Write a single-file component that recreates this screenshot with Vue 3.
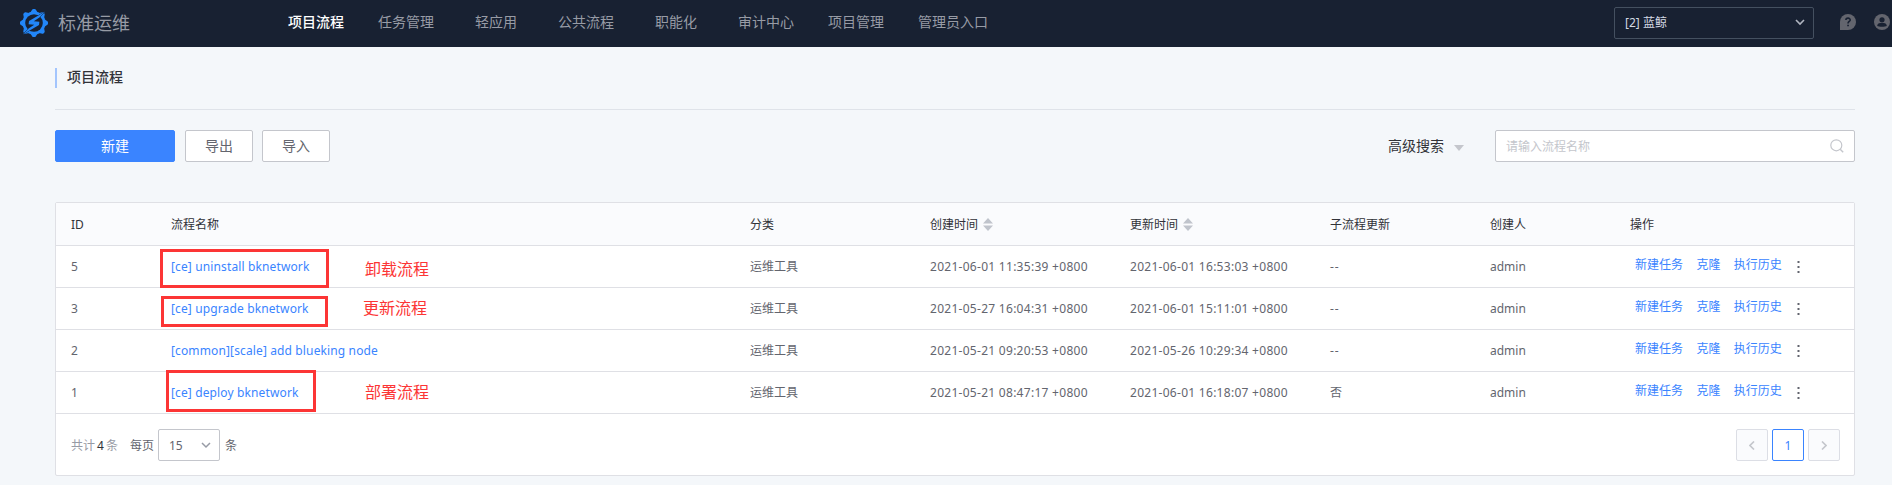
<script setup>
const nav = [
  { t: '项目流程', on: true }, { t: '任务管理' }, { t: '轻应用' }, { t: '公共流程' },
  { t: '职能化' }, { t: '审计中心' }, { t: '项目管理' }, { t: '管理员入口' }
]
const teeth = [0, 45, 90, 135, 180, 225, 270, 315]
const cols = [
  { t: 'ID' }, { t: '流程名称' }, { t: '分类' }, { t: '创建时间', sort: true },
  { t: '更新时间', sort: true }, { t: '子流程更新' }, { t: '创建人' }, { t: '操作' }
]
const rows = [
  { id: 5, name: '[ce] uninstall bknetwork', c: '2021-06-01 11:35:39 +0800', u: '2021-06-01 16:53:03 +0800', s: '--', mark: 'uninstall', note: '卸载流程' },
  { id: 3, name: '[ce] upgrade bknetwork', c: '2021-05-27 16:04:31 +0800', u: '2021-06-01 15:11:01 +0800', s: '--', mark: 'upgrade', note: '更新流程' },
  { id: 2, name: '[common][scale] add blueking node', c: '2021-05-21 09:20:53 +0800', u: '2021-05-26 10:29:34 +0800', s: '--' },
  { id: 1, name: '[ce] deploy bknetwork', c: '2021-05-21 08:47:17 +0800', u: '2021-06-01 16:18:07 +0800', s: '否', mark: 'deploy', note: '部署流程' }
]
</script>

<template>
  <div class="page">
    <header class="top">
      <svg class="logo" viewBox="0 0 28 28">
        <g fill="#2286f8">
          <circle cx="14" cy="14" r="11.600" />
          <path v-for="a in teeth" :key="a" d="M10.500 3.200 12.300.6Q12.600 0 13.300 0h1.400q.7 0 1 .6l1.800 2.600z" :transform="`rotate(${a} 14 14)`" />
        </g>
        <circle cx="14" cy="14" r="8.800" fill="#182132" />
        <g fill="#2286f8" stroke="#182132" stroke-width=".9" paint-order="stroke">
          <path d="M25.200 2.600 9 12 8.600 15.300 14.200 15.700 8.600 19.600 2.800 25.400 19 16 19.400 12.700 13.800 12.300 19.400 8.400z" />
        </g>
      </svg>
      <span class="brand">标准运维</span>
      <nav class="nav"><a v-for="n in nav" :key="n.t" :class="{ on: n.on }">{{ n.t }}</a></nav>
      <div class="project"><span>[2] 蓝鲸</span>
        <svg width="10" height="7" viewBox="0 0 10 7"><path d="M1 1l4 4 4-4" fill="none" stroke="#b0b5c0" stroke-width="1.600" /></svg>
      </div>
      <svg class="help" viewBox="0 0 16 16"><path fill="#63656e" d="M0 16V8a8 8 0 1 1 8 8z" /><path d="M5.900 6.100c0-2.700 4.300-2.600 4.300-.2C10.200 7.500 8 7.500 8 9.500" fill="none" stroke="#182132" stroke-width="1.600" /><path fill="#182132" d="M7.200 10.700h1.700v1.600H7.200z" /></svg>
      <svg class="user" viewBox="0 0 16 16"><circle cx="8" cy="8" r="8" fill="#63656e" /><circle cx="8" cy="5.800" r="2.600" fill="#182132" /><path fill="#182132" d="M3.200 12c0-2 1.500-3 3-3h3.600c1.500 0 3 1 3 3-1.500 1.100-8 1.100-9.600 0z" /></svg>
    </header>

    <main class="main">
      <div class="title"><h1>项目流程</h1></div>
      <div class="tools">
        <button class="btn primary">新建</button>
        <button class="btn">导出</button>
        <button class="btn">导入</button>
        <span class="adv">高级搜索<i></i></span>
        <div class="search"><span class="drop">请输入流程名称</span>
          <svg width="14" height="14" viewBox="0 0 14 14"><circle cx="6.300" cy="6.300" r="5.500" fill="none" stroke="#c4c6cc" stroke-width="1.200" /><path d="M10.200 10.200l3 3" stroke="#c4c6cc" stroke-width="1.400" /></svg>
        </div>
      </div>

      <section class="table">
        <div class="row head">
          <span v-for="c in cols" :key="c.t" class="cell">{{ c.t }}<svg v-if="c.sort" class="sort" width="10" height="13" viewBox="0 0 10 13"><path fill="#c0c4cc" d="M5 0l5 5.500H0zM5 13l5-5.500H0z" /></svg></span>
        </div>
        <div v-for="r in rows" :key="r.id" class="row">
          <span class="cell">{{ r.id }}</span>
          <span class="cell link name">{{ r.name }}
            <i v-if="r.mark" class="box" :class="r.mark"></i>
            <b v-if="r.note" class="note" :class="r.mark">{{ r.note }}</b>
          </span>
          <span class="cell">运维工具</span>
          <span class="cell date">{{ r.c }}</span>
          <span class="cell date">{{ r.u }}</span>
          <span class="cell" :class="{ dash: r.s === '--' }">{{ r.s }}</span>
          <span class="cell">admin</span>
          <span class="cell ops"><a>新建任务</a><a>克隆</a><a>执行历史</a>
            <svg width="3" height="12" viewBox="0 0 3 12"><path fill="#63656e" d="M.5 0h2v2h-2zM.5 5h2v2h-2zM.5 10h2v2h-2z" /></svg>
          </span>
        </div>
        <footer class="foot">
          <span class="total drop">共计<em>4</em>条</span>
          <span class="per drop">每页</span>
          <span class="size"><span class="drop">15</span><svg width="10" height="7" viewBox="0 0 10 7"><path d="M1 1l4 4 4-4" fill="none" stroke="#979ba5" stroke-width="1.500" /></svg></span>
          <span class="drop">条</span>
          <div class="pager">
            <span class="pg off"><svg width="6" height="9" viewBox="0 0 6 9"><path d="M5 .5l-4 4 4 4" fill="none" stroke="#c4c6cc" stroke-width="1.600" /></svg></span>
            <span class="pg on"><span class="drop">1</span></span>
            <span class="pg off"><svg width="6" height="9" viewBox="0 0 6 9"><path d="M1 .5l4 4-4 4" fill="none" stroke="#c4c6cc" stroke-width="1.600" /></svg></span>
          </div>
        </footer>
      </section>
    </main>
  </div>
</template>

<style>
body { background: #f4f7fa; }
</style>

<style scoped>
* { box-sizing: border-box; }
.page { width: 1892px; height: 485px; overflow: hidden; background: #f4f7fa; font: 12px/16px "Noto Sans", "Noto Sans CJK SC", sans-serif; color: #63656e; white-space: nowrap; }
.top { height: 47px; background: #182132; display: flex; align-items: center; padding-left: 20px; }
.logo { width: 28px; height: 28px; flex: none; margin-top: -1px; }
.brand { font-size: 18px; line-height: 24px; color: #979ba5; width: 230px; margin: -2px 0 0 10px; flex: none; }
.nav { display: flex; gap: 34px; width: 1326px; flex: none; font-size: 14px; line-height: 20px; color: #979ba5; margin-top: -3px; }
.nav a { min-width: 56px; text-align: center; }
.nav .on { color: #fff; font-weight: 500; }
.project { width: 200px; height: 32px; flex: none; border: 1px solid #445060; border-radius: 2px; display: flex; align-items: center; justify-content: space-between; padding: 0 8px 0 10px; color: #d3d9e4; margin-top: -2px; }
.help { width: 16px; height: 16px; flex: none; margin: -4px 0 0 26px; }
.user { width: 16px; height: 16px; flex: none; margin: -4px 0 0 18px; }
.main { margin: 0 37px 0 55px; }
.title { height: 63px; border-bottom: 1px solid #dfe3e9; padding-top: 21px; }
.title h1 { margin: 0; height: 20px; border-left: 2px solid #a3c5fd; padding-left: 10px; font-size: 14px; line-height: 18px; font-weight: 500; color: #313238; }
.tools { display: flex; align-items: center; height: 32px; margin-top: 20px; }
.btn { width: 68px; height: 32px; border: 1px solid #c4c6cc; border-radius: 2px; background: #fff; color: #63656e; font: inherit; font-size: 14px; padding: 0; margin-right: 9px; }
.btn.primary { width: 120px; background: #3a84ff; border-color: #3a84ff; color: #fff; margin-right: 10px; }
.adv { margin-left: auto; margin-right: 31px; font-size: 14px; color: #313238; display: flex; align-items: center; }
.adv i { margin: 3px 0 0 10px; border: 5px solid transparent; border-top: 6px solid #c4c6cc; border-bottom: 0; }
.search { width: 360px; height: 32px; border: 1px solid #c4c6cc; border-radius: 2px; background: #fff; display: flex; align-items: center; justify-content: space-between; padding: 0 10px; color: #c4c6cc; }
.drop { padding-top: 1px; }
.table { margin-top: 40px; height: 274px; border: 1px solid #dfe0e5; border-radius: 2px; background: #fff; }
.row { display: grid; grid-template-columns: 100px 579px 180px 200px 200px 160px 140px 1fr; height: 42px; border-bottom: 1px solid #dfe0e5; align-items: center; }
.head { height: 43px; background: #fafbfd; color: #313238; padding-top: 2px; }
.cell { padding-left: 15px; display: flex; align-items: center; position: relative; }
.sort { margin: -2px 0 0 5px; }
.link, .ops a { color: #3a84ff; }
.name { letter-spacing: .13px; }
.date { letter-spacing: .28px; }
.dash { letter-spacing: 1px; }
.ops { padding-left: 20px; margin-top: -3px; }
.ops a { margin-right: 13.400px; }
.ops svg { margin: 4px 0 0 2px; }
.box { position: absolute; border: 3px solid #fc3535; }
.box.uninstall { left: 4px; top: -10px; width: 169px; height: 39px; }
.box.upgrade { left: 5px; top: -5px; width: 167px; height: 31px; }
.box.deploy { left: 10px; top: -15px; width: 150px; height: 42px; }
.note { position: absolute; left: 209px; top: -1px; font-size: 16px; line-height: 22px; font-weight: 400; letter-spacing: 0; color: #fc3535; }
.note.upgrade { left: 207px; top: -4px; }
.note.deploy { top: -4px; }
.foot { height: 62px; display: flex; align-items: center; padding: 0 14px 0 15px; }
.total { color: #979ba5; margin-right: 12px; }
.total em { font-style: normal; color: #313238; margin: 0 2px; }
.per { margin-right: 4px; }
.size { width: 62px; height: 32px; border: 1px solid #c4c6cc; border-radius: 2px; margin-right: 5px; display: flex; align-items: center; justify-content: space-between; padding: 0 8px 0 10px; }
.pager { display: flex; gap: 4px; margin-left: auto; }
.pg { width: 32px; height: 32px; border: 1px solid #dcdee5; border-radius: 2px; display: flex; align-items: center; justify-content: center; background: #fafbfd; }
.pg.on { border-color: #3a84ff; color: #3a84ff; background: #fff; }
</style>
